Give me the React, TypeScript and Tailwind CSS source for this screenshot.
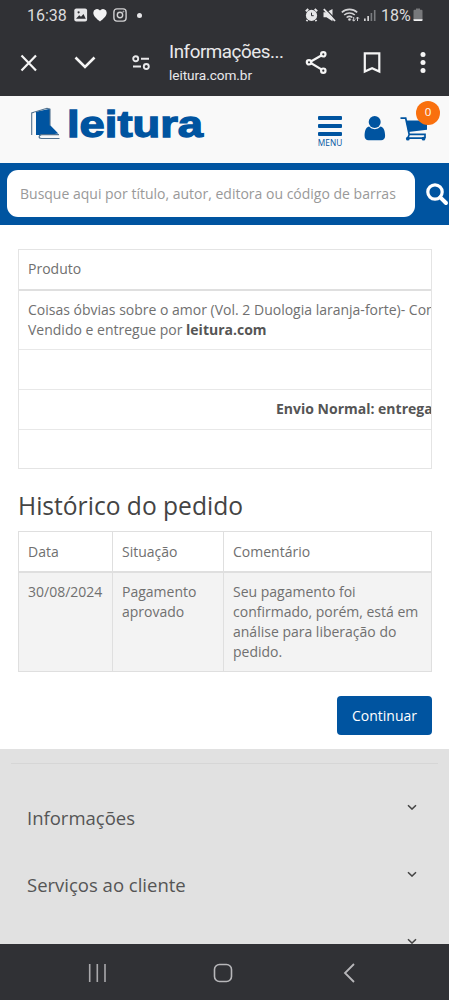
import React from "react";

function StatusBar() {
  return (
    <div className="flex h-[30px] items-center pl-[27px] text-[#dcdcde]">
      <span className="w-[47px] pt-[1px] font-['Roboto',sans-serif] text-[16px] leading-[30px]">16:38</span>
      <svg className="h-[14px] w-[14px]" viewBox="0 0 14 14">
        <rect x="0.3" y="0.5" width="12.8" height="13" rx="2" fill="#e6e6e8" />
        <path d="M2 10.8 5.2 7.3 7 8.8 9.5 6l2.3 4.8Z" fill="#303135" />
        <circle cx="4.6" cy="4.3" r="1.1" fill="#303135" />
      </svg>
      <svg className="ml-[5px] h-[14px] w-[14px]" viewBox="0 0 14 14">
        <path d="M7 13.5C4 11 .3 8.3.3 4.7A3.7 3.7 0 0 1 7 2.5 3.7 3.7 0 0 1 13.7 4.7C13.7 8.3 10 11 7 13.5Z" fill="#f2f2f3" />
      </svg>
      <svg className="ml-[6px] h-[14px] w-[14px]" viewBox="0 0 14 14" fill="none" stroke="#cfcfd1">
        <rect x="0.9" y="0.9" width="12.2" height="12.2" rx="3" strokeWidth="1.4" />
        <circle cx="7" cy="7" r="2.7" strokeWidth="1.4" />
        <circle cx="10.4" cy="3.6" r="0.5" strokeWidth="0.7" />
      </svg>
      <span className="ml-[10px] h-[5px] w-[5px] rounded-full bg-[#e6e6e8]" />
      <svg className="ml-[163px] h-[14px] w-[13px]" viewBox="0 0 13 14">
        <circle cx="6.5" cy="7.4" r="5.6" fill="#e6e6e8" />
        <path d="M.8 3.3 3.3 1M12.2 3.3 9.7 1M2.5 12 1.5 13.2M10.5 12l1 1.2" stroke="#e6e6e8" strokeWidth="1.9" />
        <path d="M6.5 4.7v3h2.2" fill="none" stroke="#303135" strokeWidth="1" />
      </svg>
      <svg className="ml-[5px] h-[14px] w-[13px]" viewBox="0 0 13 14">
        <path d="M.5 4.3h3L9.5 1v12.3l-6-4h-3Z" fill="#e6e6e8" />
        <path d="M2.5.8 13 12" stroke="#303135" strokeWidth="1.2" />
        <path d="M.8 1.2 12 13" stroke="#e6e6e8" strokeWidth="1.8" />
      </svg>
      <svg className="ml-[5px] h-[14px] w-[19px]" viewBox="0 0 19 14" fill="none" stroke="#d3d3d5" strokeWidth="1.6">
        <path d="M.8 4.3a11.5 11.5 0 0 1 15.4 0M3.2 7a8 8 0 0 1 10.6 0M5.6 9.5a4.6 4.6 0 0 1 5.8 0" />
        <circle cx="8.5" cy="11.5" r="1.3" fill="#d3d3d5" stroke="none" />
        <path d="M12.7 9v4m-1.5-1.5 1.5 1.7 1.5-1.7M16.5 13V9.2M15 10.7 16.500 9l1.500 1.700" strokeWidth="1" />
      </svg>
      <svg className="ml-[4px] h-[14px] w-[13px]" viewBox="0 0 13 14">
        <path d="M0 10.5h1.7V13H0ZM3.300 8H5v5H3.300Z" fill="#d3d3d5" />
        <path d="M6.600 5h1.600v8H6.600ZM9.900 2h1.600v11H9.900Z" fill="#7b7c80" />
      </svg>
      <span className="ml-[4px] w-[32px] pt-[1px] font-['Roboto',sans-serif] text-[16px] leading-[30px]">18%</span>
      <svg className="h-[14px] w-[10px]" viewBox="0 0 10 14">
        <path d="M3 1.800V.600h4v1.200h1.500a1 1 0 0 1 1 1V12a1 1 0 0 1-1 1H1.500a1 1 0 0 1-1-1V2.800a1 1 0 0 1 1-1Z" fill="#77787b" />
        <path d="M.5 11.200h9v.8a1 1 0 0 1-1 1H1.500a1 1 0 0 1-1-1Z" fill="#f2f2f3" />
      </svg>
    </div>
  );
}

function BrowserToolbar() {
  return (
    <div className="flex h-[65px] items-center pl-[20px]">
      <svg className="h-[18px] w-[18px]" viewBox="0 0 18 18" stroke="#f5f5f5" strokeWidth="2.2">
        <path d="m1.500 1.500 14.500 15m0-15-14.500 15" />
      </svg>
      <svg className="ml-[36px] h-[14px] w-[22px]" viewBox="0 0 22 14" fill="none" stroke="#f5f5f5" strokeWidth="2.6">
        <path d="m1.500 1.500 9.500 9.500 9.500-9.500" />
      </svg>
      <svg className="ml-[36px] h-[16px] w-[18px]" viewBox="0 0 18 16" fill="none" stroke="#e8e8ea" strokeWidth="1.9">
        <circle cx="3.700" cy="3.700" r="2.500" />
        <path d="M9 3.700h8M1 11.500h8" />
        <circle cx="14.300" cy="11.500" r="2.500" />
      </svg>
      <div className="ml-[19px] w-[118px] whitespace-nowrap font-['Roboto',sans-serif] text-[#e9e9eb]">
        <div className="text-[18.8px] leading-[24px] tracking-[-0.45px]">Informações...</div>
        <div className="text-[13.6px] leading-[22px] tracking-[-0.05px]">leitura.com.br</div>
      </div>
      <svg className="ml-[18px] h-[24px] w-[24px]" viewBox="0 0 24 24" fill="none" stroke="#f5f5f5" strokeWidth="2.2">
        <path d="M18.500 3.200 4.500 11.300l14 8.300" />
        <g fill="#303135">
          <circle cx="18.300" cy="3.300" r="2.200" />
          <circle cx="4" cy="11.300" r="2.200" />
          <circle cx="18.300" cy="19.700" r="2.200" />
        </g>
      </svg>
      <svg className="ml-[34px] h-[22px] w-[18px]" viewBox="0 0 18 22" fill="none" stroke="#f5f5f5" strokeWidth="2.2">
        <path d="M1.800 1.300h14.500v18.300l-7.200-3.300-7.300 3.300Z" />
      </svg>
      <svg className="ml-[39px] h-[22px] w-[6px]" viewBox="0 0 6 22" fill="#f5f5f5">
        <circle cx="3" cy="2.500" r="2.500" />
        <circle cx="3" cy="10.500" r="2.500" />
        <circle cx="3" cy="18.500" r="2.500" />
      </svg>
    </div>
  );
}

function SiteHeader() {
  return (
    <header className="flex h-[67px] items-start bg-[#f9f9f9] pl-[30px]">
      <svg className="mt-[4px] h-[48px] w-[182px] overflow-visible" viewBox="0 -5 182 48">
        <path d="M6 6.800 20 3.800V20l8.300 8.600L17 30H6Z" fill="#0054a0" />
        <path d="M1.700 30V8L17 3.300l3 .8v16.400" fill="none" stroke="#52728f" strokeWidth="1.100" />
        <path d="M4.900 7.500v22.500" stroke="#f9f9f9" strokeWidth="1.300" />
        <path d="M29 29.600H11.500c-3.200.8-3.200 3.900 0 3.900H29.500" fill="#f9f9f9" stroke="#52728f" strokeWidth="1.100" />
        <text
          x="37"
          y="31.8"
          textLength="136"
          lengthAdjust="spacingAndGlyphs"
          className="fill-[#0054a0] stroke-[#0054a0] font-['Liberation_Sans',Arial,sans-serif] text-[37px] font-bold"
          strokeWidth="1.3"
        >
          leitura
        </text>
      </svg>
      <div className="ml-[105px] mt-[20px] flex w-[26px] flex-col items-center text-[#0054a0]">
        <div className="flex w-[24px] flex-col gap-[4px]">
          <span className="h-[4px] rounded-[1px] bg-[#0054a0]" />
          <span className="h-[4px] rounded-[1px] bg-[#0054a0]" />
          <span className="h-[4px] rounded-[1px] bg-[#0054a0]" />
        </div>
        <span className="mt-[1px] font-['Open_Sans',sans-serif] text-[8.3px] leading-[12px]">MENU</span>
      </div>
      <svg className="ml-[21px] mt-[20px] h-[25px] w-[22px]" viewBox="0 0 22 25" fill="#0054a0">
        <circle cx="10.700" cy="6" r="6" />
        <path d="M5 10.500a7.700 7.700 0 0 0 11.600 0c3.600.7 4.500 5.500 4.500 9.500 0 2.500-1.500 4.200-4 4.200H4.500C2 24.200.6 22.500.6 20c0-4 .8-8.800 4.400-9.500Z" />
      </svg>
      <div className="relative ml-[14px] mt-[20px] h-[28px] w-[30px]">
        <svg className="h-[28px] w-[30px]" viewBox="0 0 30 28" fill="none" stroke="#0054a0">
          <path d="M6 4.500h21v9.300L8.300 16Z" fill="#0054a0" stroke="none" />
          <path d="M.5 2.200h5.200L9.200 18.500 7.800 22.200M8.800 18.300H25v4M7.800 22.200h17" strokeWidth="1.700" />
          <circle cx="7.800" cy="22.700" r="1.900" fill="#0054a0" stroke="none" />
          <circle cx="23.500" cy="22.700" r="1.900" fill="#0054a0" stroke="none" />
        </svg>
        <span className="absolute -top-[15px] left-[16px] flex h-[24px] w-[24px] items-center justify-center rounded-full bg-[#f9700e] pb-[2px] font-['Open_Sans',sans-serif] text-[11.5px] leading-none text-white">
          0
        </span>
      </div>
    </header>
  );
}

function SearchBar() {
  return (
    <div className="flex h-[62px] items-center bg-[#0054a0] pl-[7px]">
      <div className="mb-[1px] flex h-[47px] w-[408px] items-center rounded-[11px] bg-white pl-[13px] text-[14px] whitespace-nowrap text-[#999]">
        Busque aqui por título, autor, editora ou código de barras
      </div>
      <svg className="ml-[10px] h-[24px] w-[24px] shrink-0" viewBox="0 0 24 24" fill="none" stroke="#fff">
        <circle cx="10" cy="10" r="7.200" strokeWidth="3.200" />
        <path d="m15.300 15.300 5.700 5.700" strokeWidth="4" strokeLinecap="round" />
      </svg>
    </div>
  );
}

function ProductTable() {
  return (
    <div className="h-[220px] overflow-hidden border border-[#e4e4e4] whitespace-nowrap">
      <div className="h-[41px] border-b-2 border-[#dfdfdf] pl-[9px] leading-[38px]">Produto</div>
      <div className="h-[59px] border-b border-[#e8e8e8] pt-[9px] pl-[9px]">
        <div>Coisas óbvias sobre o amor (Vol. 2 Duologia laranja-forte)- Conto</div>
        <div>
          Vendido e entregue por <b className="text-[#555]">leitura.com</b>
        </div>
      </div>
      <div className="h-[40px] border-b border-[#e8e8e8]" />
      <div className="h-[40px] border-b border-[#e8e8e8] pl-[257px] leading-[38px] font-bold text-[#555]">
        Envio Normal: entrega em
      </div>
    </div>
  );
}

function HistoryTable() {
  return (
    <div className="grid h-[141px] grid-cols-[94px_111px_1fr] grid-rows-[41px_1fr] border border-[#dfdfdf]">
      <div className="border-r border-b-2 border-[#dfdfdf] pl-[9px] leading-[39px]">Data</div>
      <div className="border-r border-b-2 border-[#dfdfdf] pl-[9px] leading-[39px]">Situação</div>
      <div className="border-b-2 border-[#dfdfdf] pl-[9px] leading-[39px]">Comentário</div>
      <div className="border-r border-[#dfdfdf] bg-[#f3f3f3] pt-[9px] pl-[9px]">30/08/2024</div>
      <div className="border-r border-[#dfdfdf] bg-[#f3f3f3] pt-[9px] pl-[9px]">
        Pagamento
        <br />
        aprovado
      </div>
      <div className="bg-[#f3f3f3] pt-[9px] pl-[9px] whitespace-nowrap">
        Seu pagamento foi
        <br />
        confirmado, porém, está em
        <br />
        análise para liberação do
        <br />
        pedido.
      </div>
    </div>
  );
}

function FooterRow({ label }: { label: string }) {
  return (
    <div className="flex h-[67px] shrink-0 items-start justify-between pr-[32px] pl-[27px] text-[18.5px] leading-[24px] text-[#555]">
      <span className="mt-[9px]">{label}</span>
      <svg className="mt-[7px] h-[6px] w-[10px]" viewBox="0 0 10 6" fill="none" stroke="#444" strokeWidth="1.5">
        <path d="m1 1.200 4 3.900 4-3.900" />
      </svg>
    </div>
  );
}

function SystemNav() {
  return (
    <nav className="flex h-[56px] shrink-0 items-center bg-[#303135] pt-[2px] pl-[88px]">
      <svg className="h-[18px] w-[18px]" viewBox="0 0 18 18" stroke="#a9a9ac" strokeWidth="1.6">
        <path d="M1.700 0v18M9.300 0v18M17 0v18" />
      </svg>
      <svg className="ml-[107px] h-[20px] w-[20px]" viewBox="0 0 20 20" fill="none" stroke="#b7b7ba" strokeWidth="1.6">
        <rect x="1.500" y="1.500" width="17" height="17" rx="5" />
      </svg>
      <svg className="ml-[110px] h-[20px] w-[12px]" viewBox="0 0 12 20" fill="none" stroke="#b7b7ba" strokeWidth="1.8">
        <path d="m11 1-9 9 9 9" />
      </svg>
    </nav>
  );
}

export default function App() {
  return (
    <div className="flex h-[1000px] w-[449px] flex-col overflow-hidden bg-white font-['Open_Sans',sans-serif] text-[14px] leading-[20px] text-[#707070]">
      <div className="h-[96px] shrink-0 bg-[#303135]">
        <StatusBar />
        <BrowserToolbar />
      </div>
      <SiteHeader />
      <SearchBar />
      <main className="flex h-[524px] shrink-0 flex-col pt-[24px] pr-[17px] pl-[18px]">
        <ProductTable />
        <h1 className="mt-[21px] mb-[9px] text-[24.6px] leading-[32px] text-[#444]">Histórico do pedido</h1>
        <HistoryTable />
        <button className="mt-[24px] h-[39px] w-[95px] self-end rounded-[4px] bg-[#0054a0] text-white">Continuar</button>
      </main>
      <footer className="h-[195px] shrink-0 overflow-hidden bg-[#e1e1e1] pt-[14px]">
        <div className="mx-[11px] mb-[33px] h-px bg-[#d6d6d6]" />
        <div className="flex flex-col">
          <FooterRow label="Informações" />
          <FooterRow label="Serviços ao cliente" />
          <FooterRow label="" />
        </div>
      </footer>
      <SystemNav />
    </div>
  );
}
